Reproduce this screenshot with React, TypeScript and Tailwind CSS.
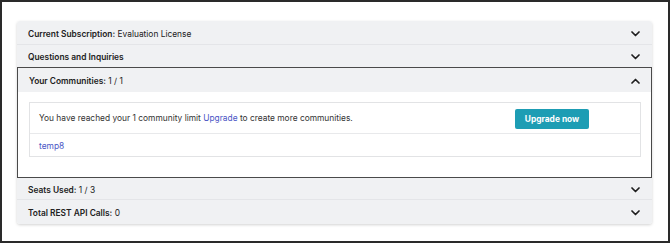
import React from "react";

const Chevron = ({ up = false }: { up?: boolean }) => (
  <svg width="9" height="6" viewBox="0 0 9 6" className="shrink-0 mt-[2px]">
    <path
      d={up ? "M1 5 L4.5 1.5 L8 5" : "M1 1 L4.5 4.5 L8 1"}
      fill="none"
      stroke="#1f1f1f"
      strokeWidth="1.7"
      strokeLinecap="round"
      strokeLinejoin="round"
    />
  </svg>
);

const Row = ({
  label,
  value,
  h,
  border = true,
}: {
  label: string;
  value?: string;
  h: string;
  border?: boolean;
}) => (
  <div
    className={`flex items-center justify-between bg-[#f0f1f3] pl-[11px] pr-[12px] ${h} ${
      border ? "border-b border-[#e4e5e8]" : ""
    }`}
  >
    <div className="text-[8.4px] text-[#222] pt-[3px]">
      <span className="font-semibold">{label}</span>
      {value !== undefined && <span> {value}</span>}
    </div>
    <Chevron />
  </div>
);

export default function App() {
  return (
    <div
      className="w-[670px] h-[243px] border-2 border-[#2a2a2a] bg-white pl-[15px] pt-[19px]"
      style={{ fontFamily: "Inter, 'Noto Sans', sans-serif" }}
    >
      <div className="w-[635px] rounded-[3px] shadow-[0_1px_3px_rgba(0,0,0,0.18)] overflow-hidden">
        <Row label="Current Subscription:" value="Evaluation License" h="h-[24px]" />
        <Row label="Questions and Inquiries" h="h-[22px]" border={false} />
        <div className="border border-[#4a4a4a] w-[635px]">
          <div className="flex items-center justify-between bg-[#f0f1f3] pl-[11px] pr-[11px] h-[24px]">
            <div className="text-[8.4px] text-[#222] pt-[3px]">
              <span className="font-semibold">Your Communities:</span>
              <span> 1 / 1</span>
            </div>
            <Chevron up />
          </div>
          <div className="bg-white pl-[11px] pr-[10px] pt-[10px] pb-[20px]">
            <div className="border border-[#e2e3e5]">
              <div className="flex items-center h-[31px] border-b border-[#e8e9eb] pl-[9px]">
                <div className="w-[476px] text-[8.4px] text-[#333]">
                  You have reached your 1 community limit{" "}
                  <span className="text-[#4a55c5]">Upgrade</span> to create more
                  communities.
                </div>
                <button className="w-[74px] h-[20px] mt-[2px] rounded-[2px] bg-[#1d9db4] text-white text-[8.4px] font-bold">
                  Upgrade now
                </button>
              </div>
              <div className="flex items-center h-[22px] pl-[9px] pt-[2px] text-[8.4px] text-[#4a55c5]">
                temp8
              </div>
            </div>
          </div>
        </div>
        <Row label="Seats Used:" value="1 / 3" h="h-[22px]" />
        <Row label="Total REST API Calls:" value="0" h="h-[24px]" border={false} />
      </div>
    </div>
  );
}
